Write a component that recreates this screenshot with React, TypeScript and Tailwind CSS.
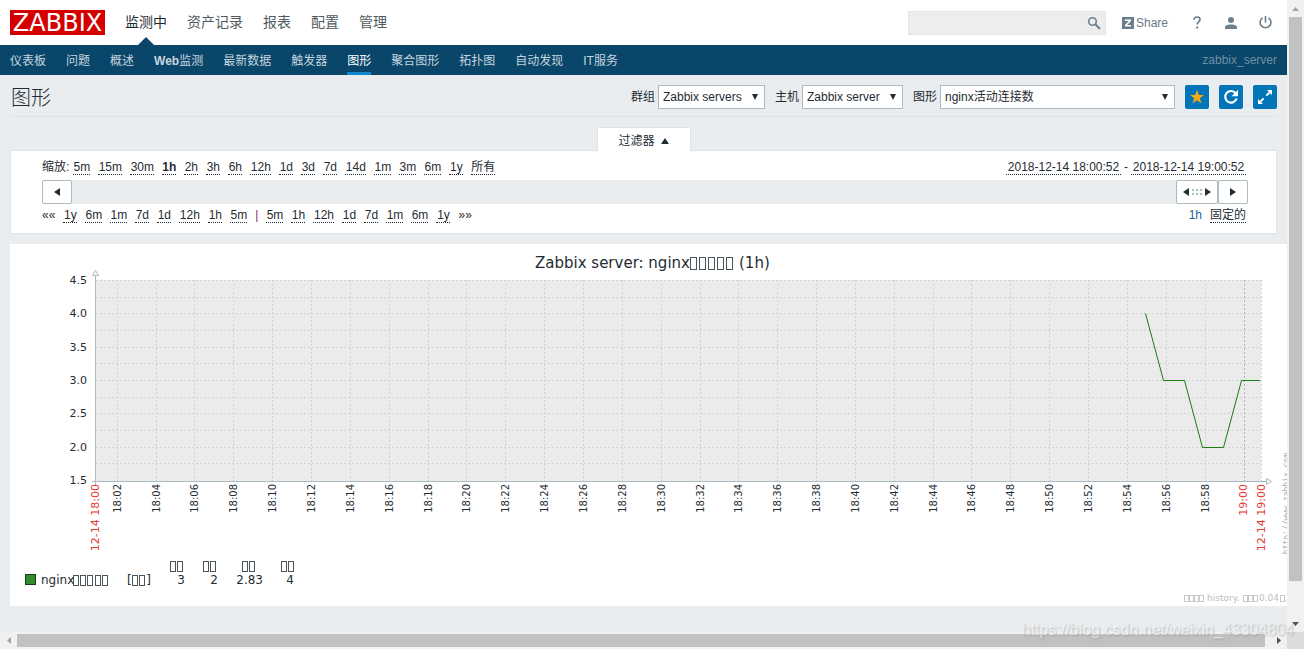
import React from "react";

const NAV = ["监测中", "资产记录", "报表", "配置", "管理"];
const SUBNAV = ["仪表板", "问题", "概述", "Web监测", "最新数据", "触发器", "图形", "聚合图形", "拓扑图", "自动发现", "IT服务"];
const ZOOM = ["5m", "15m", "30m", "1h", "2h", "3h", "6h", "12h", "1d", "3d", "7d", "14d", "1m", "3m", "6m", "1y", "所有"];
const BACK = ["1y", "6m", "1m", "7d", "1d", "12h", "1h", "5m"];
const FORWARD = ["5m", "1h", "12h", "1d", "7d", "1m", "6m", "1y"];

function Header() {
  return (
    <header className="flex h-[45px] items-center bg-white px-[10px]">
      <a href="#home" className="flex h-[25px] w-[95px] items-center justify-center bg-[#d40000] pt-[2px] font-['DejaVu_Sans'] text-[24px] leading-[23px] text-white">
        ZABBIX
      </a>
      <nav className="ml-5 flex h-full gap-5 text-[14px]">
        {NAV.map((label, i) => (
          <a key={label} href="#nav" className={`relative flex items-center ${i === 0 ? "text-[#1f2c33]" : "text-[#4f5a60]"}`}>
            {label}
            {i === 0 && (
              <svg className="absolute bottom-0 left-1/2 -translate-x-1/2" width="16" height="8" viewBox="0 0 16 8">
                <path d="M0 8L8 0l8 8z" fill="#0a466a" />
              </svg>
            )}
          </a>
        ))}
      </nav>
      <form className="relative ml-auto" onSubmit={(e) => e.preventDefault()}>
        <input type="search" aria-label="Search" className="block h-6 w-[198px] border border-[#e3e5e6] bg-[#ededed] px-2 text-[12px] outline-none" />
        <button aria-label="Search" className="absolute right-1 top-1 flex h-4 w-4 items-center justify-center">
          <svg width="14" height="14" viewBox="0 0 14 14" fill="none" stroke="#6b7f8c">
            <circle cx="5.5" cy="5.5" r="3.8" strokeWidth="1.6" />
            <path d="M8.3 8.3L13 13" strokeWidth="2" />
          </svg>
        </button>
      </form>
      <a href="#share" className="ml-4 flex items-center gap-[2px] text-[12px] text-[#6b7b86]">
        <svg width="12" height="12" viewBox="0 0 12 12">
          <rect width="12" height="12" fill="#6b7f8c" />
          <path d="M3 2.500h6v1.500L5.200 8H9v1.500H3V8l3.800-4H3z" fill="#fff" />
        </svg>
        Share
      </a>
      <a href="#help" aria-label="Help" className="ml-[21px] flex w-4 justify-center">
        <svg width="10" height="13" viewBox="0 0 10 13" fill="none" stroke="#6b7f8c" strokeWidth="1.7">
          <path d="M2 3.8C2 2 3.2 1 5 1s3 1 3 2.6C8 5.6 5.2 5.700 5.200 8.600" />
          <path d="M5.200 10.500v2" strokeWidth="2" />
        </svg>
      </a>
      <a href="#profile" aria-label="Profile" className="ml-[18px] flex w-4 justify-center">
        <svg width="12" height="12" viewBox="0 0 12 12" fill="#6b7f8c">
          <circle cx="6" cy="3" r="3" />
          <path d="M0 12v-1.700C0 8.300 3 7.500 6 7.500s6 .8 6 2.800V12z" />
        </svg>
      </a>
      <a href="#logout" aria-label="Sign out" className="mx-1 ml-[18px] flex w-4 justify-center">
        <svg width="13" height="13" viewBox="0 0 13 13" fill="none" stroke="#6b7f8c" strokeWidth="1.600">
          <path d="M3.600 1.800a5.400 5.400 0 1 0 5.800 0M6.500 0v6.500" />
        </svg>
      </a>
    </header>
  );
}

function SubNav() {
  return (
    <div className="flex h-[30px] items-center justify-between bg-[#0a466a] px-[10px] text-[12px]">
      <nav className="flex h-full gap-5">
        {SUBNAV.map((label) => (
          <a
            key={label}
            href="#sub"
            className={`flex items-center border-b-[3px] pt-1 ${label === "图形" ? "border-[#0f85cb] text-white" : "border-transparent text-[#c5d5df]"}`}
          >
            {label.startsWith("Web") ? (
              <>
                <b>Web</b>监测
              </>
            ) : (
              label
            )}
          </a>
        ))}
      </nav>
      <span className="text-[#6d8fa3]">zabbix_server</span>
    </div>
  );
}

function Select({ id, label, value, width }: { id: string; label: string; value: string; width: string }) {
  return (
    <div className="flex items-center gap-[3px]">
      <label htmlFor={id}>{label}</label>
      <div className={`relative ${width}`}>
        <select id={id} className="block h-6 w-full appearance-none border border-[#acbbc2] bg-white pl-1 pr-4 text-[12px] text-[#1f2c33]">
          <option>{value}</option>
        </select>
        <svg className="pointer-events-none absolute right-[7px] top-[9px]" width="6" height="6" viewBox="0 0 6 6">
          <path d="M0 0h6L3 6z" fill="#1f2c33" />
        </svg>
      </div>
    </div>
  );
}

const ICON_BUTTON = "flex h-6 w-6 items-center justify-center rounded-[2px] bg-[#0275b8]";

function TitleBar() {
  return (
    <div className="mx-[10px] flex h-[42px] items-center border-b border-[#dfe4e7] pt-[2px] text-[12px]">
      <h1 className="pl-px pt-[2px] text-[20px] font-light text-[#1f2c33]">图形</h1>
      <form className="ml-auto flex items-center gap-[10px]" onSubmit={(e) => e.preventDefault()}>
        <Select id="group" label="群组" value="Zabbix servers" width="w-[107px]" />
        <Select id="host" label="主机" value="Zabbix server" width="w-[101px]" />
        <Select id="graph" label="图形" value="nginx活动连接数" width="w-[235px]" />
        <button aria-label="Favourite" className={ICON_BUTTON}>
          <svg width="14" height="14" viewBox="0 0 14 14">
            <path d="M7 0l1.900 5H14l-4.100 3.200L11.400 13.500 7 10.300 2.600 13.500 4.100 8.200 0 5h5.100z" fill="#f5a915" />
          </svg>
        </button>
        <button aria-label="Reset" className={ICON_BUTTON}>
          <svg width="16" height="16" viewBox="0 0 16 16">
            <path d="M12.600 4.200A5.800 5.800 0 1 0 13.600 9.500" fill="none" stroke="#fff" strokeWidth="2.200" />
            <path d="M15 .8v6.400H8.600z" fill="#fff" />
          </svg>
        </button>
        <button aria-label="Fullscreen" className={ICON_BUTTON}>
          <svg width="16" height="16" viewBox="0 0 16 16">
            <path d="M10 1h5v5zM1 10v5h5z" fill="#fff" />
            <path d="M9.300 6.700L12.500 3.500M6.700 9.300l-3.200 3.200" stroke="#fff" strokeWidth="1.800" />
          </svg>
        </button>
      </form>
    </div>
  );
}

function linkWidth(label: string) {
  if (label.length > 3) return "min-w-[115px]";
  const wide = label.endsWith("m");
  if (label.length === 3) return wide ? "min-w-[24px]" : "min-w-[21px]";
  return wide ? "min-w-[17px]" : "min-w-[14px]";
}

function TimeLink({ label, bold }: { label: string; bold?: boolean }) {
  return (
    <a href="#time" className={`border-b border-dotted border-[#1f2c33] text-center leading-[14px] ${linkWidth(label)} ${bold ? "font-bold" : ""}`}>
      {label}
    </a>
  );
}

const SLIDER_BUTTON = "flex h-6 items-center justify-center gap-[3px] rounded-[2px] border border-[#acbbc2] bg-white";

function Left() {
  return (
    <svg width="6" height="8" viewBox="0 0 6 8">
      <path d="M6 0v8L0 4z" fill="#1f2c33" />
    </svg>
  );
}

function Right() {
  return (
    <svg width="6" height="8" viewBox="0 0 6 8">
      <path d="M0 0v8l6-4z" fill="#1f2c33" />
    </svg>
  );
}

function Filter() {
  return (
    <section className="mx-[10px] mt-[10px] text-[12px]">
      <div className="flex justify-center">
        <button className="relative z-10 -mb-px flex h-6 w-[94px] items-center justify-center gap-[6px] border border-b-0 border-[#dfe4e7] bg-white pt-[3px]">
          过滤器
          <svg width="8" height="6" viewBox="0 0 8 6">
            <path d="M4 0l4 6H0z" fill="#1f2c33" />
          </svg>
        </button>
      </div>
      <div className="h-[84px] border border-[#dfe4e7] bg-white pl-[31px] pr-[28px] pt-[9px]">
        <div className="flex h-5 items-start justify-between pr-[2px]">
          <div className="flex gap-2">
            <span className="-mr-1 leading-[14px]">缩放:</span>
            {ZOOM.map((z) => (
              <TimeLink key={z} label={z} bold={z === "1h"} />
            ))}
          </div>
          <div className="flex gap-[3px] leading-[14px]">
            <TimeLink label="2018-12-14 18:00:52" />-<TimeLink label="2018-12-14 19:00:52" />
          </div>
        </div>
        <div className="flex bg-[#e9edf0]">
          <button aria-label="Earlier" className={`${SLIDER_BUTTON} w-[30px]`}>
            <Left />
          </button>
          <button aria-label="Period" className={`${SLIDER_BUTTON} ml-auto w-[42px]`}>
            <Left />
            <svg width="10" height="6" viewBox="0 0 10 6" fill="#acbbc2">
              <path d="M0 0h2v2H0zM4 0h2v2H4zM8 0h2v2H8zM0 4h2v2H0zM4 4h2v2H4zM8 4h2v2H8z" />
            </svg>
            <Right />
          </button>
          <button aria-label="Later" className={`${SLIDER_BUTTON} w-[30px]`}>
            <Right />
          </button>
        </div>
        <div className="flex items-start justify-between pr-[2px] pt-1">
          <div className="flex gap-2 leading-[14px]">
            <span>««</span>
            {BACK.map((z) => (
              <TimeLink key={z} label={z} />
            ))}
            <span className="text-[#7a2a6a]">|</span>
            {FORWARD.map((z) => (
              <TimeLink key={z} label={z} />
            ))}
            <span>»»</span>
          </div>
          <div className="flex gap-2 leading-[14px]">
            <span className="text-[#1f5f8f]">1h</span>
            <TimeLink label="固定的" />
          </div>
        </div>
      </div>
    </section>
  );
}

const ROWS = [36, 53, 69, 86, 103, 119, 136, 153, 169, 186, 203, 219];
const Y_LABELS = ["4.5", "4.0", "3.5", "3.0", "2.5", "2.0", "1.5"];
const TICKS = Array.from({ length: 29 }, (_, i) => ({
  x: Math.floor(107.29 + 38.85 * i),
  label: `18:${String(2 + 2 * i).padStart(2, "0")}`,
}));

function VerticalText({ x, y, children, size, fill }: { x: number; y: number; children: string; size: number; fill: string }) {
  return (
    <text transform={`translate(${x} ${y}) rotate(-90)`} textAnchor="end" fontSize={size} fill={fill}>
      {children}
    </text>
  );
}

function Boxes({ x, y, count, w, h, pitch, stroke = "#1f2c33" }: { x: number; y: number; count: number; w: number; h: number; pitch: number; stroke?: string }) {
  return (
    <g fill="none" stroke={stroke} strokeWidth="1" opacity="0.8">
      {Array.from({ length: count }, (_, i) => (
        <rect key={i} x={x + 0.5 + Math.round(i * pitch)} y={y + 0.5} width={w} height={h} />
      ))}
    </g>
  );
}

const LEGEND = [
  { x: 160, value: "3", right: 175 },
  { x: 193, value: "2", right: 208 },
  { x: 232, value: "2.83", right: 253 },
  { x: 271, value: "4", right: 284 },
];

function Graph() {
  return (
    <section className="ml-[10px] mt-[10px] overflow-hidden bg-white">
      <svg width="1277" height="362" viewBox="0 0 1277 362" className="block font-['DejaVu_Sans',sans-serif]" fill="#1f2c33">
        <text x="525" y="24" fontSize="15">Zabbix server: nginx</text>
        <Boxes x={680} y={13} count={5} w={6} h={12} pitch={9} />
        <text x="729" y="24" fontSize="15">(1h)</text>

        <rect x="86" y="36" width="1165" height="201" fill="#ebebeb" />
        <g stroke="#ccd5d9" strokeDasharray="2 2" shapeRendering="crispEdges">
          {ROWS.map((y) => (
            <path key={y} d={`M86 ${y + 0.5}H1251`} />
          ))}
          {TICKS.map((t) => (
            <path key={t.label} d={`M${t.x + 0.5} 36V237`} />
          ))}
          <path d="M1251.500 36V237" />
          <path d="M1234.500 36V237" stroke="#a5b8c0" />
        </g>
        <g stroke="#acbbc2" fill="#fff">
          <path d="M85.500 36V241M82 237.500H1258" fill="none" shapeRendering="crispEdges" />
          <path d="M82.500 31.500h6l-3-5zM85.500 32v5" />
          <path d="M1256.500 234.500v6l5-3z" />
        </g>
        <path d="M1135.500 69.500L1153.500 136.500H1174.500L1192.500 203.500H1213.500L1231.500 136.500H1250" fill="none" stroke="#1a7c11" />

        {Y_LABELS.map((label, i) => (
          <text key={label} x="77" y={Math.round(40 + i * 33.300)} textAnchor="end" fontSize="11">
            {label}
          </text>
        ))}
        {TICKS.map((t) => (
          <VerticalText key={t.label} x={t.x + 4} y={240} size={10} fill="#1f2c33">
            {t.label}
          </VerticalText>
        ))}
        <VerticalText x={89} y={240} size={11} fill="#e33734">12-14 18:00</VerticalText>
        <VerticalText x={1237} y={240} size={11} fill="#e33734">19:00</VerticalText>
        <VerticalText x={1255} y={240} size={11} fill="#e33734">12-14 19:00</VerticalText>
        <g className="font-['DejaVu_Sans_Mono',monospace]">
          <VerticalText x={1279} y={209} size={8} fill="#acacac">http://www.zabbix.com</VerticalText>
        </g>

        <rect x="15.500" y="330.500" width="10" height="10" fill="#358a2c" stroke="#123f10" />
        <g fontSize="12">
          <text x="31" y="340">nginx</text>
          <Boxes x={63} y={331} count={5} w={5} h={10} pitch={7.200} />
          <text x="117" y="340">[</text>
          <Boxes x={122} y={331} count={2} w={5} h={10} pitch={7} />
          <text x="141" y="340" textAnchor="end">]</text>
          {LEGEND.map((l) => (
            <g key={l.x}>
              <Boxes x={l.x} y={317} count={2} w={5} h={10} pitch={7} />
              <text x={l.right} y="340" textAnchor="end">{l.value}</text>
            </g>
          ))}
        </g>
        <g fontSize="9" fill="#bdbdbd">
          <Boxes x={1174} y={351} count={4} w={4} h={6} pitch={5} stroke="#bdbdbd" />
          <text x="1197" y="357">history.</text>
          <Boxes x={1233} y={351} count={3} w={4} h={6} pitch={5} stroke="#bdbdbd" />
          <text x="1249" y="357">0.04</text>
          <Boxes x={1270} y={351} count={1} w={4} h={6} pitch={5} stroke="#bdbdbd" />
          <text x="1274" y="357">.</text>
        </g>
      </svg>
    </section>
  );
}

function VerticalScrollbar() {
  return (
    <div className="flex flex-col items-center bg-[#f1f1f1]">
      <div className="flex h-[17px] items-center">
        <svg width="7" height="4" viewBox="0 0 7 4"><path d="M3.500 0L7 4H0z" fill="#a3a3a3" /></svg>
      </div>
      <div className="mb-[34px] w-[13px] flex-1 bg-[#c1c1c1]" />
      <div className="flex h-[17px] items-center">
        <svg width="7" height="4" viewBox="0 0 7 4"><path d="M0 0h7L3.500 4z" fill="#505050" /></svg>
      </div>
    </div>
  );
}

function HorizontalScrollbar() {
  return (
    <div className="flex items-center bg-[#f1f1f1]">
      <div className="flex w-[17px] justify-center">
        <svg width="4" height="7" viewBox="0 0 4 7"><path d="M4 0v7L0 3.500z" fill="#a3a3a3" /></svg>
      </div>
      <div className="mr-[5px] h-[13px] flex-1 bg-[#c1c1c1]" />
      <div className="flex w-[17px] justify-center">
        <svg width="4" height="7" viewBox="0 0 4 7"><path d="M0 0v7l4-3.500z" fill="#505050" /></svg>
      </div>
    </div>
  );
}

export default function App() {
  return (
    <div className="relative grid h-screen grid-cols-[minmax(0,1fr)_17px] grid-rows-[minmax(0,1fr)_17px] overflow-hidden bg-[#e9edf0] font-['Liberation_Sans','Noto_Sans_CJK_SC',sans-serif] text-[#1f2c33]">
      <div className="overflow-hidden">
        <Header />
        <SubNav />
        <TitleBar />
        <Filter />
        <Graph />
      </div>
      <VerticalScrollbar />
      <HorizontalScrollbar />
      <div className="bg-[#dcdcdc]" />
      <div className="absolute bottom-[9px] right-[10px] text-[16px] leading-5 text-white/60 [text-shadow:1px_1px_2px_rgba(120,120,120,0.45)]">
        https://blog.csdn.net/weixin_43304804
      </div>
    </div>
  );
}
